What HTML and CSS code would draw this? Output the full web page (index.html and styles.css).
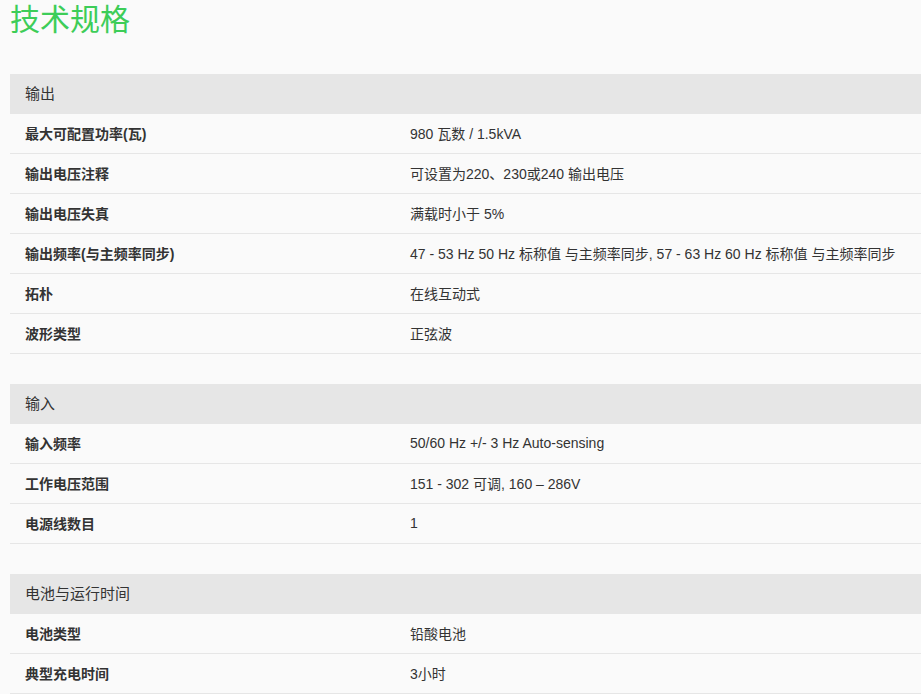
FILE: index.html
```html
<!DOCTYPE html>
<html lang="zh-CN">
<head>
<meta charset="utf-8">
<title>技术规格</title>
<link rel="stylesheet" href="styles.css">
</head>
<body>
<h1 class="title">技术规格</h1>

<section class="spec">
  <div class="spec-head">输出</div>
  <div class="spec-row"><div class="spec-label">最大可配置功率(瓦)</div><div class="spec-value">980 瓦数 / 1.5kVA</div></div>
  <div class="spec-row"><div class="spec-label">输出电压注释</div><div class="spec-value">可设置为220、230或240 输出电压</div></div>
  <div class="spec-row"><div class="spec-label">输出电压失真</div><div class="spec-value">满载时小于 5%</div></div>
  <div class="spec-row"><div class="spec-label">输出频率(与主频率同步)</div><div class="spec-value">47 - 53 Hz 50 Hz 标称值 与主频率同步, 57 - 63 Hz 60 Hz 标称值 与主频率同步</div></div>
  <div class="spec-row"><div class="spec-label">拓朴</div><div class="spec-value">在线互动式</div></div>
  <div class="spec-row"><div class="spec-label">波形类型</div><div class="spec-value">正弦波</div></div>
</section>

<section class="spec">
  <div class="spec-head">输入</div>
  <div class="spec-row"><div class="spec-label">输入频率</div><div class="spec-value">50/60 Hz +/- 3 Hz Auto-sensing</div></div>
  <div class="spec-row"><div class="spec-label">工作电压范围</div><div class="spec-value">151 - 302 可调, 160 – 286V</div></div>
  <div class="spec-row"><div class="spec-label">电源线数目</div><div class="spec-value">1</div></div>
</section>

<section class="spec">
  <div class="spec-head">电池与运行时间</div>
  <div class="spec-row"><div class="spec-label">电池类型</div><div class="spec-value">铅酸电池</div></div>
  <div class="spec-row"><div class="spec-label">典型充电时间</div><div class="spec-value">3小时</div></div>
</section>
</body>
</html>
```

FILE: styles.css
```css
html, body {
  margin: 0;
  padding: 0;
  background: #fafafa;
  overflow: hidden;
}
body {
  padding-left: 10px;
  font-family: "Liberation Sans", Arial, "Noto Sans CJK SC", sans-serif;
  color: #333;
}
.title {
  margin: 2px 0 36px 0;
  font-size: 30px;
  line-height: 36px;
  font-weight: normal;
  color: #3dcd58;
}
.spec {
  margin-bottom: 30px;
}
.spec-head {
  height: 40px;
  box-sizing: border-box;
  background: #e6e6e6;
  display: flex;
  align-items: center;
  padding: 0 0 3px 15px;
  font-size: 15px;
  color: #333;
}
.spec-row {
  display: grid;
  grid-template-columns: 400px 1fr;
  align-items: center;
  height: 40px;
  box-sizing: border-box;
  padding-bottom: 2px;
  border-bottom: 1px solid #e6e6e6;
}
.spec-label {
  padding-left: 15px;
  font-size: 14px;
  font-weight: bold;
  color: #333;
}
.spec-value {
  font-size: 14px;
  color: #333;
  white-space: nowrap;
}
```
